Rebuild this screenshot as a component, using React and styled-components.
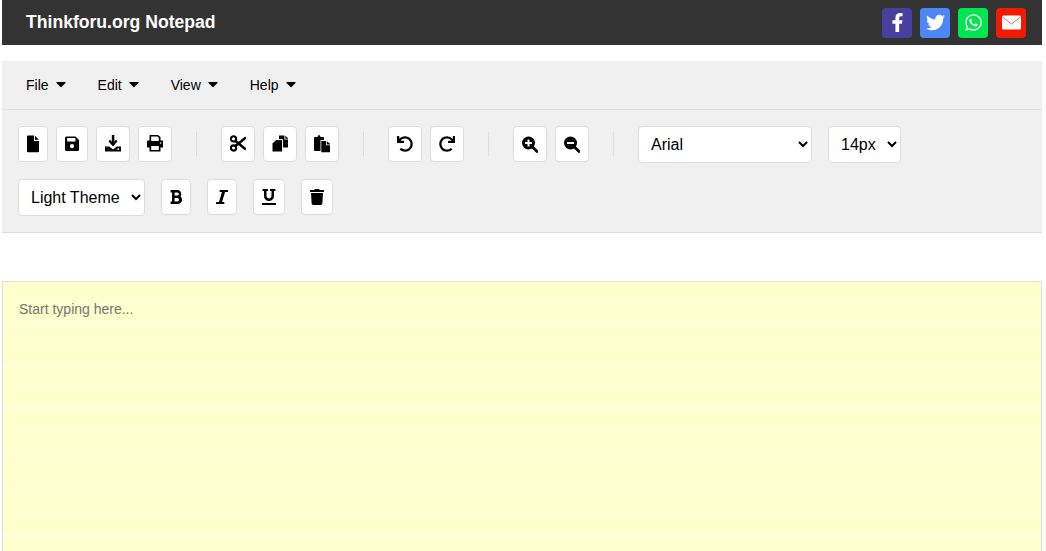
import React from "react";
import styled, { createGlobalStyle } from "styled-components";
import {
  FaUndo, FaRedo, FaBold, FaItalic, FaUnderline, FaTrash, FaCaretDown,
  FaFacebookF, FaTwitter, FaWhatsapp,
} from "react-icons/fa";

const Global = createGlobalStyle`
  html, body { margin: 0; padding: 0; height: 551px; overflow: hidden; background: #fff; }
  body { font-family: "Liberation Sans", Arial, sans-serif; color: #000; }
`;

const Page = styled.div`
  width: 1040px;
  margin-left: 2px;
`;

const Header = styled.header`
  height: 45px;
  background: #333;
  display: flex;
  align-items: center;
  justify-content: space-between;
  padding: 0 16px 0 24px;
  margin-bottom: 16px;
`;

const Title = styled.h1`
  margin: 0;
  font-size: 17.6px;
  font-weight: 700;
  color: #fff;
`;

const Socials = styled.div`
  display: flex;
  gap: 8px;
`;

const Social = styled.a`
  width: 30px;
  height: 30px;
  border-radius: 4px;
  background: ${(p) => p.$bg};
  color: #fff;
  display: flex;
  align-items: center;
  justify-content: center;
  font-size: 19px;
`;

const MenuBar = styled.nav`
  height: 48px;
  background: #f0f0f0;
  border-bottom: 1px solid #ddd;
  display: flex;
  align-items: center;
  padding-left: 24px;
  gap: 31.4px;
  font-size: 14px;
`;

const MenuItem = styled.div`
  display: flex;
  align-items: center;
  gap: 7.6px;
`;

const Caret = styled(FaCaretDown)`
  width: 10px;
  height: 16px;
  margin-top: -2px;
  flex: none;
`;

const Toolbar = styled.div`
  background: #f0f0f0;
  border-bottom: 1px solid #ddd;
  padding: 16px;
  display: flex;
  flex-wrap: wrap;
  gap: 16px;
  align-items: flex-start;
  margin-bottom: 48px;
`;

const Group = styled.div`
  display: flex;
  gap: 8px;
`;

const Divider = styled.div`
  width: 1px;
  height: 24px;
  background: #ddd;
  margin: 6px 8px 0;
`;

const IconButton = styled.button`
  width: ${(p) => p.$w || 34}px;
  height: 36px;
  padding: 0;
  border: 1px solid #ddd;
  border-radius: 4px;
  background: #fff;
  color: #000;
  font-size: 16px;
  display: flex;
  align-items: center;
  justify-content: center;
  svg { display: block; flex: none; }
`;

const Select = styled.select`
  height: 37px;
  width: ${(p) => p.$w}px;
  padding: 8px;
  border: 1px solid #ddd;
  border-radius: 4px;
  background: #fff;
  color: #000;
  font-size: 16px;
  font-family: "Liberation Sans", Arial, sans-serif;
`;

const Editor = styled.textarea`
  display: block;
  width: 100%;
  height: 400px;
  box-sizing: border-box;
  padding: 17px 16px 16px;
  border: 1px solid #ddd;
  outline: none;
  resize: none;
  font-family: "Liberation Sans", Arial, sans-serif;
  font-size: 14px;
  line-height: 21px;
  color: #000;
  background-color: #fdffcc;
  background-image:
    linear-gradient(#fdffcc, #fdffcc),
    repeating-linear-gradient(
      to bottom,
      rgba(255, 255, 255, 0.65) 0,
      rgba(255, 255, 255, 0.65) 1px,
      transparent 1px,
      transparent 21px,
      rgba(255, 255, 255, 0.25) 21px,
      rgba(255, 255, 255, 0.25) 22px,
      transparent 22px,
      transparent 42px
    );
  background-size: 100% 2px, 100% 42px;
  background-repeat: no-repeat, repeat-y;
  &::placeholder { color: #757575; opacity: 1; }
`;

const Glyph = ({ w = 16, children }) => (
  <svg width={w} height="18" viewBox={`0 0 ${w} 18`} fill="currentColor" aria-hidden="true">
    {children}
  </svg>
);

const FileIcon = () => (
  <Glyph w={12}>
    <path d="M1 0.5H7V6H12V16.3a1 1 0 0 1-1 1H1a1 1 0 0 1-1-1V1.5a1 1 0 0 1 1-1Z" />
    <path d="M8 0.7L12 4.8H8Z" />
  </Glyph>
);

const SaveIcon = () => (
  <Glyph w={14}>
    <path
      fillRule="evenodd"
      d="M1.5 1.5H10.5L14 5V14.5a1.5 1.5 0 0 1-1.5 1.5H1.5A1.5 1.5 0 0 1 0 14.5V3a1.5 1.5 0 0 1 1.5-1.5ZM2.2 3V6.5H10.5V3ZM7 9A2.1 2.1 0 1 0 7 13.2 2.1 2.1 0 0 0 7 9Z"
    />
  </Glyph>
);

const DownloadIcon = () => (
  <Glyph>
    <rect x="6.8" y="0" width="2.5" height="10" />
    <path d="M3.5 6.2L5 4.8L8 8L11 4.8L12.5 6.2L8 11.6Z" />
    <path
      fillRule="evenodd"
      d="M0 11.5H4.3L8 14.4L11.7 11.5H16V16.5H0ZM13.2 13.2a.9.9 0 1 0 0 1.8.9.9 0 0 0 0-1.8Z"
    />
  </Glyph>
);

const PrintIcon = () => (
  <Glyph>
    <path
      fillRule="evenodd"
      d="M3 0H11L13.5 2V5.5H16V12.5H13.5V16.5H2.5V12.5H0V6.5a1 1 0 0 1 1-1H2.5V1a1 1 0 0 1 .5-1ZM4.2 1.6V6H11.8V2.6L10.4 1.6ZM4.2 11V14.9H11.8V11ZM13.6 7.2a.8.8 0 1 0 0 1.6.8.8 0 0 0 0-1.6Z"
    />
  </Glyph>
);

const CutIcon = () => (
  <Glyph>
    <g fill="none" stroke="currentColor" strokeWidth="2.1">
      <circle cx="3.5" cy="3.9" r="2.6" />
      <circle cx="3.5" cy="13" r="2.6" />
    </g>
    <path d="M5.2 5.7L16 14.6" stroke="currentColor" strokeWidth="2.6" />
    <path d="M5.2 11.3L16 2.4" stroke="currentColor" strokeWidth="2.6" />
  </Glyph>
);

const CopyIcon = () => (
  <Glyph>
    <path d="M7 0.5H12.4V4.6H16.6V12.5H7Z" />
    <path d="M13.4 0.7L16.5 3.7H13.4Z" />
    <path d="M4 4.6H10.6V17H0V8.6Z" stroke="#fff" strokeWidth="1" />
  </Glyph>
);

const PasteIcon = () => (
  <Glyph>
    <path d="M1 2H3.5C3.7 .6 4.4 .2 5 .2S6.3 .6 6.5 2H9a1 1 0 0 1 1 1V5H6.5V16H1a1 1 0 0 1-1-1V3a1 1 0 0 1 1-1Z" />
    <path d="M7.3 6H12V10.3H17V17.2H7.3ZM12.8 6.2L16.8 9.5H12.8Z" />
  </Glyph>
);

const ZoomIcon = ({ plus }) => (
  <Glyph>
    <circle cx="6.5" cy="8" r="6.5" />
    <path d="M10.5 12L15 16.5" stroke="currentColor" strokeWidth="2.8" strokeLinecap="round" />
    <path d="M3 8H10" stroke="#fff" strokeWidth="2" />
    {plus && <path d="M6.5 4.5V11.5" stroke="#fff" strokeWidth="2" />}
  </Glyph>
);

const MailIcon = () => (
  <svg width="19" height="15" viewBox="0 0 19 15" aria-hidden="true">
    <rect x="0" y="0.5" width="19" height="14" rx="1.5" fill="#fff" />
    <path d="M0.5 2L9.5 9L18.5 2" fill="none" stroke="#f01b00" strokeWidth="0.9" opacity="0.75" />
  </svg>
);

const ItalicIcon = () => <FaItalic preserveAspectRatio="none" style={{ width: 12, height: 16 }} />;

const menus = ["File", "Edit", "View", "Help"];
const socials = [
  ["#4a3f9f", <FaFacebookF key="f" />],
  ["#4d86f7", <FaTwitter key="t" />],
  ["#00e650", <FaWhatsapp key="w" />],
  ["#f01b00", <MailIcon key="e" />],
];
const groups = [
  [[<FileIcon />, 30], [<SaveIcon />, 32], [<DownloadIcon />], [<PrintIcon />]],
  [[<CutIcon />], [<CopyIcon />], [<PasteIcon />]],
  [[<FaUndo />], [<FaRedo />]],
  [[<ZoomIcon plus />], [<ZoomIcon />]],
];

export default function App() {
  return (
    <Page>
      <Global />
      <Header>
        <Title>Thinkforu.org Notepad</Title>
        <Socials>
          {socials.map(([bg, icon], i) => (
            <Social key={i} $bg={bg}>{icon}</Social>
          ))}
        </Socials>
      </Header>
      <MenuBar>
        {menus.map((m) => (
          <MenuItem key={m}>{m}<Caret /></MenuItem>
        ))}
      </MenuBar>
      <Toolbar>
        {groups.map((g, i) => (
          <React.Fragment key={i}>
            <Group>
              {g.map(([icon, w], j) => (
                <IconButton key={j} $w={w}>{icon}</IconButton>
              ))}
            </Group>
            <Divider />
          </React.Fragment>
        ))}
        <Select $w={174} defaultValue="Arial">
          <option>Arial</option>
          <option>Times New Roman</option>
          <option>Courier New</option>
        </Select>
        <Select $w={73} defaultValue="14px">
          <option>12px</option>
          <option>14px</option>
          <option>16px</option>
        </Select>
        <Select $w={127} defaultValue="Light Theme">
          <option>Light Theme</option>
          <option>Dark Theme</option>
        </Select>
        <IconButton $w={30}><FaBold /></IconButton>
        <IconButton $w={30}><ItalicIcon /></IconButton>
        <IconButton $w={32}><FaUnderline /></IconButton>
        <IconButton $w={32}><FaTrash /></IconButton>
      </Toolbar>
      <Editor placeholder="Start typing here..." />
    </Page>
  );
}
